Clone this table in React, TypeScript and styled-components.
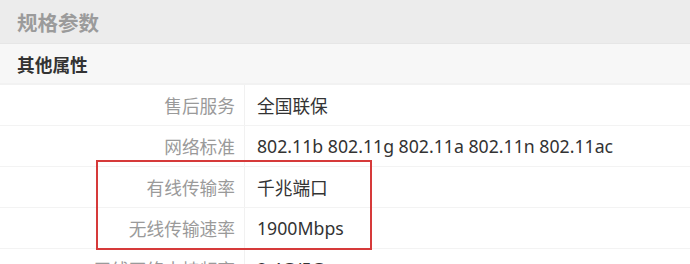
import React from "react";
import styled, { createGlobalStyle } from "styled-components";

const Global = createGlobalStyle`
  html, body { margin: 0; padding: 0; background: #fff; }
  body { font-family: "Noto Sans", "Noto Sans CJK SC", sans-serif; }
`;

const Page = styled.div`
  width: 690px;
  height: 264px;
  overflow: hidden;
  background: #fff;
`;

const Title = styled.div`
  height: 43px;
  background: #ececec;
  border-bottom: 1px solid #e6e6e6;
  display: flex;
  align-items: center;
  padding-left: 17px;
  font-size: 20.5px;
  font-weight: 700;
  color: #9b9b9b;
  font-family: "Noto Sans CJK SC", sans-serif;
`;

const Section = styled.div`
  height: 39px;
  background: #f7f7f7;
  border-bottom: 2px solid #f2f2f2;
  display: flex;
  align-items: center;
  padding-left: 17px;
  font-size: 17.7px;
  font-weight: 700;
  color: #333;
  font-family: "Noto Sans CJK SC", sans-serif;
`;

const Table = styled.div`
  display: flex;
  flex-direction: column;
`;

const Row = styled.div`
  display: grid;
  grid-template-columns: 245px 1fr;
  height: 41px;
  border-bottom: 1px solid #f3f3f3;
  box-sizing: border-box;
`;

const Label = styled.div`
  display: flex;
  align-items: center;
  justify-content: flex-end;
  padding-right: 9px;
  border-right: 1px solid #f1f1f1;
  font-size: 17.7px;
  color: #9a9a9a;
  font-family: "Noto Sans CJK SC", sans-serif;
`;

const Value = styled.div`
  display: flex;
  align-items: center;
  padding-left: 12px;
  font-size: 17.7px;
  color: #333;
  white-space: nowrap;
`;

const Highlight = styled.div`
  position: relative;
  &::after {
    content: "";
    position: absolute;
    left: 96px;
    width: 276px;
    top: -7px;
    bottom: -1px;
    border: 2.5px solid #d63a3a;
    box-sizing: border-box;
    pointer-events: none;
  }
`;

const rows1 = [
  ["售后服务", "全国联保"],
  ["网络标准", "802.11b 802.11g 802.11a 802.11n 802.11ac"],
];
const rows2 = [
  ["有线传输率", "千兆端口"],
  ["无线传输速率", "1900Mbps"],
];
const rows3 = [["无线网络支持频率", "2.4G/5G"]];

const renderRows = (rows: string[][]) =>
  rows.map(([k, v]) => (
    <Row key={k}>
      <Label>{k}</Label>
      <Value>{v}</Value>
    </Row>
  ));

export default function App() {
  return (
    <>
      <Global />
      <Page>
        <Title>规格参数</Title>
        <Section>其他属性</Section>
        <Table>
          {renderRows(rows1)}
          <Highlight>{renderRows(rows2)}</Highlight>
          {renderRows(rows3)}
        </Table>
      </Page>
    </>
  );
}
